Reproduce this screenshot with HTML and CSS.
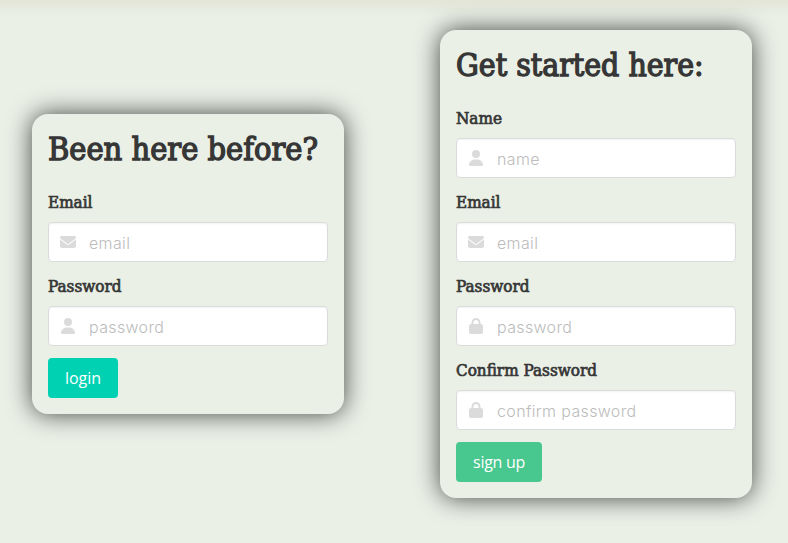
FILE: index.html
```html
<!DOCTYPE html>
<html lang="en">
<head>
<meta charset="utf-8">
<title>Login</title>
<link rel="stylesheet" href="styles.css">
</head>
<body>
<svg class="defs" aria-hidden="true">
  <symbol id="user" viewBox="0 0 448 512"><path d="M224 256a128 128 0 1 0 0-256 128 128 0 1 0 0 256zm-45.700 48C79.800 304 0 383.800 0 482.300 0 498.700 13.300 512 29.700 512h388.600c16.400 0 29.700-13.300 29.700-29.700C448 383.800 368.200 304 269.700 304z"/></symbol>
  <symbol id="mail" viewBox="0 0 512 512"><path d="M48 64C21.500 64 0 85.500 0 112c0 15.100 7.100 29.300 19.200 38.400l217.600 163.200c11.400 8.500 27 8.500 38.400 0l217.600-163.200c12.100-9.100 19.200-23.300 19.200-38.400 0-26.500-21.500-48-48-48zM0 176v208c0 35.300 28.700 64 64 64h384c35.300 0 64-28.700 64-64V176L294.400 339.200c-22.800 17.100-54 17.100-76.800 0z"/></symbol>
  <symbol id="lock" viewBox="0 0 448 512"><path d="M144 144v48h160v-48c0-44.200-35.800-80-80-80s-80 35.800-80 80zM80 192v-48C80 64.500 144.500 0 224 0s144 64.500 144 144v48h16c35.300 0 64 28.700 64 64v192c0 35.300-28.700 64-64 64H64c-35.300 0-64-28.700-64-64V256c0-35.300 28.700-64 64-64z"/></symbol>
</svg>
<main class="columns">
  <form class="card">
    <h1 class="title"><span class="slab been">Been here before?</span></h1>
    <div class="field"><label class="label"><span class="slab">Email</span></label>
      <div class="control"><svg class="icon"><use href="#mail"/></svg><span class="placeholder">email</span></div></div>
    <div class="field"><label class="label"><span class="slab">Password</span></label>
      <div class="control"><svg class="icon"><use href="#user"/></svg><span class="placeholder">password</span></div></div>
    <button class="button primary" type="button">login</button>
  </form>
  <form class="card">
    <h1 class="title"><span class="slab">Get started here:</span></h1>
    <div class="field"><label class="label"><span class="slab">Name</span></label>
      <div class="control"><svg class="icon"><use href="#user"/></svg><span class="placeholder">name</span></div></div>
    <div class="field"><label class="label"><span class="slab">Email</span></label>
      <div class="control"><svg class="icon"><use href="#mail"/></svg><span class="placeholder">email</span></div></div>
    <div class="field"><label class="label"><span class="slab">Password</span></label>
      <div class="control"><svg class="icon"><use href="#lock"/></svg><span class="placeholder">password</span></div></div>
    <div class="field"><label class="label"><span class="slab">Confirm Password</span></label>
      <div class="control"><svg class="icon"><use href="#lock"/></svg><span class="placeholder">confirm password</span></div></div>
    <button class="button success" type="button">sign up</button>
  </form>
</main>
</body>
</html>
```
FILE: styles.css
```css
* { box-sizing: border-box; }
body {
  margin: 0;
  height: 543px;
  overflow: hidden;
  color: #363636;
  font: 16px/24px "Open Sans", sans-serif;
  background: linear-gradient(#e4e5d7 0, #e5e7da 4px, #eaf0e6 16px) #eaf0e6;
}
.defs { display: none; }
.columns {
  display: flex;
  align-items: center;
  justify-content: space-between;
  height: 528px;
  padding: 0 36px 0 32px;
}
.card {
  width: 312px;
  padding: 16px;
  border-radius: 16px;
  background: #eaf0e6;
  box-shadow: 0 0 24px rgba(0, 0, 0, .72);
}
.title {
  height: 36px;
  margin: 0 0 24px;
  font-size: 32px;
  line-height: 36px;
  font-weight: 400;
  white-space: nowrap;
}
.slab {
  display: inline-block;
  font-family: "Roboto Slab", "DejaVu Serif Condensed", "DejaVu Serif", serif;
  transform: scaleX(.99);
  transform-origin: left;
  -webkit-text-stroke: 1.3px #363636;
}
.been { transform: scaleX(1.007); }
.label { display: block; height: 24px; margin-bottom: 8px; font-weight: 400; }
.label .slab { transform: scaleX(1.06); -webkit-text-stroke-width: .65px; }
.field { margin-bottom: 12px; }
.control {
  display: flex;
  align-items: center;
  height: 40px;
  border: 1px solid #dbdbdb;
  border-radius: 4px;
  background: #fff;
  box-shadow: inset 0 1px 2px rgba(10, 10, 10, .05);
}
.icon { width: 16px; height: 16px; margin: 0 13px 0 11px; fill: #dbdbdb; }
.placeholder {
  position: relative;
  top: 1px;
  font-family: Inter, sans-serif;
  font-weight: 300;
  letter-spacing: .35px;
  color: #bcbcbc;
}
.button {
  display: block;
  height: 40px;
  padding: 0;
  border: 0;
  border-radius: 4px;
  color: #fff;
  font: 16px/24px "Open Sans", sans-serif;
  white-space: nowrap;
}
.primary { width: 70px; background: #00d1b2; }
.success { width: 86px; background: #48c78e; }
.success { letter-spacing: -.3px; }
```
